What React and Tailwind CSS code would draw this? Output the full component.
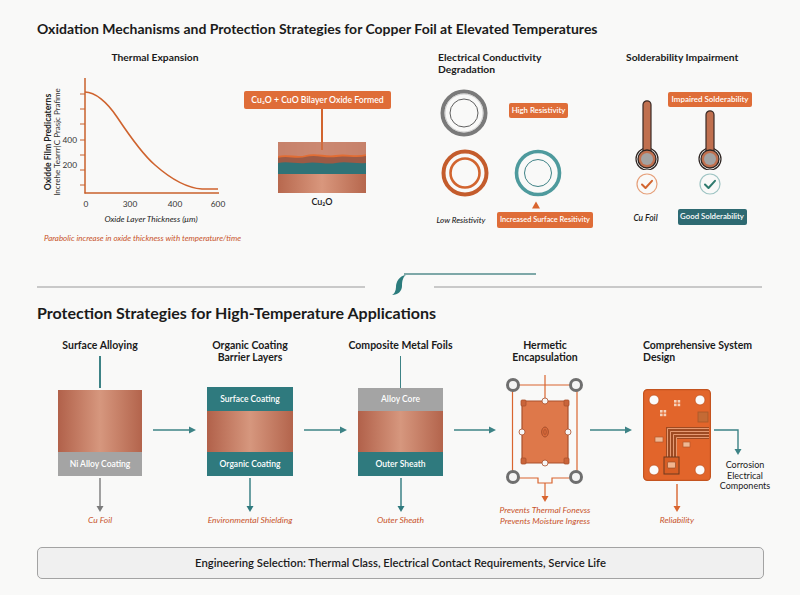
import React from "react";

const orange = "#d9652f";
const teal = "#2f7a7e";
const copper = "bg-linear-to-r from-[#b1614a] via-[#d6977e] to-[#b3644c]";

function DownArrow({ color, h = 34 }) {
  return (
    <svg width="10" height={h} viewBox={`0 0 10 ${h}`}>
      <line x1="5" y1="0" x2="5" y2={h - 5} stroke={color} strokeWidth="1.4" />
      <path d={`M1.5 ${h - 6} L5 ${h} L8.5 ${h - 6} Z`} fill={color} />
    </svg>
  );
}

function RightArrow({ w = 43 }) {
  return (
    <svg width={w} height="8" viewBox={`0 0 ${w} 8`} className="block">
      <line x1="0" y1="4" x2={w - 6} y2="4" stroke="#3d8386" strokeWidth="1.4" />
      <path d={`M${w - 7} 0.5 L${w} 4 L${w - 7} 7.5 Z`} fill="#3d8386" />
    </svg>
  );
}

function Ring({ kind }) {
  if (kind === "gray")
    return (
      <svg width="48" height="48" viewBox="0 0 48 48">
        <circle cx="24" cy="24" r="21.5" fill="none" stroke="#7a7a7a" strokeWidth="4" />
        <circle cx="24" cy="24" r="19" fill="none" stroke="#c4c4c4" strokeWidth="0.8" />
        <circle cx="24" cy="24" r="14" fill="none" stroke="#5f5f5f" strokeWidth="1" />
      </svg>
    );
  if (kind === "orange")
    return (
      <svg width="48" height="48" viewBox="0 0 48 48">
        <circle cx="24" cy="24" r="21.5" fill="none" stroke="#c45c2c" strokeWidth="4" />
        <circle cx="24" cy="24" r="14.5" fill="none" stroke="#d2652f" strokeWidth="2.6" />
      </svg>
    );
  return (
    <svg width="48" height="48" viewBox="0 0 48 48">
      <circle cx="24" cy="24" r="21.5" fill="none" stroke="#4e9a9d" strokeWidth="3.6" />
      <circle cx="24" cy="24" r="13.5" fill="none" stroke="#3f8286" strokeWidth="1" />
    </svg>
  );
}

function Thermometer({ h }) {
  const cy = h - 11;
  return (
    <svg width="24" height={h} viewBox={`0 0 24 ${h}`}>
      <circle cx="12" cy={cy} r="11" fill="none" stroke="#2f2623" strokeWidth="1.2" />
      <rect x="8" y="0.8" width="8" height={cy - 4} rx="4" fill="#c0704f" stroke="#3a2a26" strokeWidth="1.2" />
      <circle cx="12" cy={cy} r="9" fill="#c0704f" stroke="#2f2623" strokeWidth="1.3" />
      <circle cx="12" cy={cy} r="6" fill="#a3a3a3" />
    </svg>
  );
}

function Check({ ring, mark }) {
  return (
    <svg width="22" height="22" viewBox="0 0 22 22">
      <circle cx="11" cy="11" r="10" fill="none" stroke={ring} strokeWidth="1.2" />
      <path d="M6 11.5 L9.5 15 L16 7.8" fill="none" stroke={mark} strokeWidth="2" strokeLinecap="round" strokeLinejoin="round" />
    </svg>
  );
}

function Chart() {
  const yTicks = [22, 37, 52, 68, 83, 98, 113];
  return (
    <svg width="205" height="152" viewBox="0 0 205 152" className="block">
      <text transform="translate(14 70) rotate(-90)" textAnchor="middle" fontSize="8.6" fontWeight="700" fill="#222">
        Oxidde Film Predicaterns
      </text>
      <text transform="translate(23 70) rotate(-90)" textAnchor="middle" fontSize="8" fill="#333">
        Increhe Tearrr|C Prasjc Prafime
      </text>
      <line x1="48" y1="6" x2="48" y2="121.5" stroke="#c8602c" strokeWidth="1.5" />
      <line x1="47.5" y1="121" x2="182" y2="121" stroke="#c8602c" strokeWidth="1.5" />
      {yTicks.map((y) => (
        <line key={y} x1="43" y1={y} x2="48" y2={y} stroke="#c8602c" strokeWidth="1" />
      ))}
      <text x="40" y="71" textAnchor="end" fontSize="8.3" fill="#333">400</text>
      <text x="40" y="96" textAnchor="end" fontSize="8.3" fill="#333">200</text>
      {[[49, "0"], [93, "300"], [138, "400"], [181, "600"]].map(([x, t]) => (
        <text key={t} x={x} y="135" textAnchor="middle" fontSize="8.3" fill="#333">{t}</text>
      ))}
      <path
        d="M48 20 C58 20 70 30 80 45 C92 63 105 82 118 93 C135 108 150 116 165 117 L181 117"
        fill="none"
        stroke="#cf632e"
        strokeWidth="1.6"
      />
      <text x="114" y="150" textAnchor="middle" fontSize="8.3" fontStyle="italic" fill="#222">
        Oxide Layer Thickness (μm)
      </text>
    </svg>
  );
}

function OxideLayers() {
  return (
    <svg width="88" height="51" viewBox="0 0 88 51" className="block">
      <defs>
        <linearGradient id="cu" x1="0" x2="1" y1="0" y2="0">
          <stop offset="0" stopColor="#b7684e" />
          <stop offset="0.5" stopColor="#d9977d" />
          <stop offset="1" stopColor="#b6674d" />
        </linearGradient>
      </defs>
      <rect x="0" y="0" width="88" height="51" fill="url(#cu)" />
      <rect x="0" y="0" width="88" height="16" fill="#c98670" opacity="0.85" />
      <rect x="0" y="19" width="88" height="13" fill="#2f7377" />
      <path d="M0 15 C10 12 18 17 28 14 C38 11 48 16 58 14 C68 12 78 16 88 13 L88 21 C78 22 68 19 58 21 C48 23 38 19 28 21 C18 22 10 19 0 21 Z" fill="#9c5a45" />
      <path d="M0 15 C10 12 18 17 28 14 C38 11 48 16 58 14 C68 12 78 16 88 13" fill="none" stroke="#e26d33" strokeWidth="1.8" />
      <line x1="44" y1="0" x2="44" y2="8" stroke="#d2652f" strokeWidth="1.5" />
    </svg>
  );
}

function Hermetic() {
  const rings = [[8, 13], [71, 13], [8, 105], [71, 105]];
  const ol = "#a9502c";
  return (
    <svg width="80" height="132" viewBox="0 0 80 132" className="block">
      <g stroke={orange} strokeWidth="1.2" fill="none">
        <line x1="14" y1="13" x2="65" y2="13" />
        <line x1="7.5" y1="19" x2="7.5" y2="99" />
        <line x1="72" y1="19" x2="72" y2="99" />
        <path d="M14 106 H33 V111 H47 V106 H65" />
        <line x1="40" y1="3" x2="40" y2="29" />
        <line x1="40" y1="111" x2="40" y2="125" />
      </g>
      <path d="M36.5 124 L40 130 L43.5 124 Z" fill={orange} />
      <rect x="17" y="29" width="46" height="62" rx="2" fill="#de784a" stroke={ol} strokeWidth="1.2" />
      {[[16, 28], [59, 28], [16, 86], [59, 86]].map(([x, y], i) => (
        <rect key={i} x={x} y={y} width="5" height="6" rx="1" fill="#c9643a" stroke={ol} strokeWidth="0.8" />
      ))}
      {[[17, 60], [63, 60], [40, 29], [40, 91]].map(([x, y], i) => (
        <circle key={i} cx={x} cy={y} r="3" fill="#f6f6f6" stroke={ol} strokeWidth="0.8" />
      ))}
      <ellipse cx="40" cy="60" rx="3.4" ry="5" fill="#d8693a" stroke={ol} strokeWidth="1" />
      <ellipse cx="40" cy="60" rx="1.3" ry="2.6" fill="none" stroke={ol} strokeWidth="0.8" />
      {rings.map(([x, y], i) => (
        <circle key={i} cx={x} cy={y} r="5.5" fill="#f4f4f4" stroke="#6f6f6f" strokeWidth="3" />
      ))}
    </svg>
  );
}

function Pcb() {
  const holes = [[11, 11], [57, 11], [11, 81], [57, 81]];
  const quad = (x, y) =>
    [[0, 0], [3.6, 0], [0, 3.6], [3.6, 3.6]].map(([dx, dy], i) => (
      <rect key={`${x}-${i}`} x={x + dx} y={y + dy} width="2.6" height="2.6" fill="#f6d2bb" />
    ));
  return (
    <svg width="68" height="92" viewBox="0 0 68 92" className="block">
      <rect x="0.6" y="0.6" width="66.8" height="90.8" rx="4" fill="#e2652b" stroke="#c4541f" strokeWidth="1.2" />
      {holes.map(([x, y], i) => (
        <circle key={i} cx={x} cy={y} r="5" fill="#fbfbfb" stroke="#c4541f" strokeWidth="0.8" />
      ))}
      {quad(31, 11)}
      {quad(17, 21)}
      <rect x="55" y="23" width="10" height="10" fill="#c46a35" stroke="#a8582a" strokeWidth="0.8" />
      <path d="M23 70 V38 H66 V50 H34 V70 Z" fill="#9e4a22" />
      {[0, 1, 2, 3].map((i) => (
        <path
          key={i}
          d={`M${24.5 + i * 3} 70 V${39.5 + i * 3} H66`}
          fill="none"
          stroke="#eea37a"
          strokeWidth="0.9"
        />
      ))}
      <rect x="12" y="48" width="8" height="5" fill="#efb894" stroke="#b2582c" strokeWidth="0.7" />
      <rect x="40" y="53" width="7" height="5" fill="#efb894" stroke="#b2582c" strokeWidth="0.7" />
      <rect x="21" y="68" width="15" height="17" fill="#d85e25" stroke="#6d3a20" strokeWidth="1" />
      <rect x="24.5" y="73" width="8" height="6" rx="1" fill="#f2b48e" stroke="#8a4423" strokeWidth="0.6" />
    </svg>
  );
}

function Tag({ children, color = "bg-[#df6d38]", className = "" }) {
  return (
    <div className={`${color} text-white font-semibold rounded-[2px] flex items-center justify-center whitespace-nowrap ${className}`}>
      {children}
    </div>
  );
}

export default function App() {
  return (
    <div className="w-[800px] h-[595px] overflow-hidden bg-[#f9f9f8] text-[#1b1b1b] font-['Lato',sans-serif]">
      <h1 className="pl-[37px] pt-[20px] text-[14px] leading-[18px] font-bold whitespace-nowrap">
        Oxidation Mechanisms and Protection Strategies for Copper Foil at Elevated Temperatures
      </h1>

      {/* Oxidation mechanisms */}
      <section className="flex items-start mt-[12px] h-[210px]">
        <div className="ml-[37px] w-[207px] shrink-0 flex flex-col">
          <h3 className="w-[236px] text-center text-[10.3px] leading-[14px] font-bold">Thermal Expansion</h3>
          <div className="mt-[8px]">
            <Chart />
          </div>
          <p className="mt-[9px] ml-[7px] text-[8px] leading-[10px] italic text-[#c8532a] whitespace-nowrap">
            Parabolic increase in oxide thickness with temperature/time
          </p>
        </div>

        <div className="w-[147px] shrink-0 flex flex-col items-center mt-[41px]">
          <Tag className="h-[18px] w-[147px] text-[8.7px]">Cu₂O + CuO Bilayer Oxide Formed</Tag>
          <div className="ml-[9px] flex flex-col items-center">
            <div className="w-[1.5px] h-[33px] bg-[#d2652f]" />
            <OxideLayers />
            <span className="mt-[3px] text-[9px] leading-[12px] font-semibold">Cu₂O</span>
          </div>
        </div>

        <div className="ml-[45px] w-[165px] shrink-0 flex flex-col mt-[2px]">
          <h3 className="pl-[2px] text-[10.3px] leading-[11.5px] font-bold">
            Electrical Conductivity
            <br />
            Degradation
          </h3>
          <div className="flex items-center mt-[14px]">
            <div className="ml-[4px]">
              <Ring kind="gray" />
            </div>
            <Tag className="ml-[21px] -mt-[5px] h-[15px] w-[59px] text-[7.8px]">High Resistivity</Tag>
          </div>
          <div className="flex mt-[12px]">
            <div className="ml-[5px]">
              <Ring kind="orange" />
            </div>
            <div className="ml-[25px]">
              <Ring kind="teal" />
            </div>
          </div>
          <svg width="10" height="8" viewBox="0 0 10 8" className="ml-[95px] mt-[4px]">
            <path d="M5 0.5 L9 7.5 L1 7.5 Z" fill="#d9652f" />
          </svg>
          <div className="flex items-center mt-[3px]">
            <span className="w-[50px] text-center text-[8px] italic font-medium whitespace-nowrap">Low Resistivity</span>
            <Tag className="ml-[11px] h-[16px] w-[96px] text-[7.4px]">Increased Surface Resitivity</Tag>
          </div>
        </div>

        <div className="ml-[25px] w-[140px] shrink-0 flex flex-col mt-[2px]">
          <h3 className="text-[10.3px] leading-[11.5px] font-bold whitespace-nowrap">Solderability Impairment</h3>
          <div className="flex items-start mt-[28px]">
            <div className="w-[42px] flex flex-col items-center">
              <div className="mt-[8px]">
                <Thermometer h={70} />
              </div>
              <div className="mt-[3px]">
                <Check ring="#e6a07a" mark="#d2652f" />
              </div>
              <span className="mt-[18px] -ml-[3px] text-[8.5px] leading-[10px] italic font-semibold">Cu Foil</span>
            </div>
            <div className="w-[84px] flex flex-col items-center">
              <Tag className="h-[15px] w-[84px] text-[8px]">Impaired Solderability</Tag>
              <div className="mt-[3px]">
                <Thermometer h={60} />
              </div>
              <div className="mt-[3px]">
                <Check ring="#9ec4c3" mark="#2f7a6e" />
              </div>
              <Tag color="bg-[#2e6a72]" className="mt-[14px] ml-[4px] h-[16px] w-[69px] text-[7.8px]">
                Good Solderability
              </Tag>
            </div>
          </div>
        </div>
      </section>

      {/* Divider */}
      <div className="flex items-start h-[24px] mt-[12px]">
        <div className="ml-[37px] mt-[14px] w-[328px] h-[1.5px] bg-[#c9c9c9]" />
        <svg width="16" height="22" viewBox="0 0 16 22" className="ml-[26px] mt-[2px]">
          <path d="M15 1 C8 2 5 8 5 13 C5 17 3 20 1 21 C7 21 11 17 11 12 C11 7 12 3 15 1 Z" fill="#2c7c7d" />
        </svg>
        <div className="flex flex-col">
          <div className="-ml-[3px] mt-[1px] w-[132px] h-[1.5px] bg-[#7ea8a8]" />
          <div className="ml-[27px] mt-[11.5px] w-[328px] h-[1.5px] bg-[#c9c9c9]" />
        </div>
      </div>

      <h2 className="pl-[37px] mt-[7px] text-[16px] leading-[20px] font-bold whitespace-nowrap">
        Protection Strategies for High-Temperature Applications
      </h2>

      {/* Protection strategies */}
      <section className="flex items-start mt-[16px] h-[190px]">
        <div className="ml-[58px] w-[84px] shrink-0 flex flex-col items-center">
          <h4 className="text-[10.5px] leading-[12px] font-bold whitespace-nowrap">Surface Alloying</h4>
          <div className="mt-[5px] w-[1.5px] h-[32px] bg-[#3d8386]" />
          <div className="mt-[2px] w-[84px] h-[86px] flex flex-col">
            <div className={`flex-1 ${copper}`} />
            <div className="h-[24px] bg-[#a4a4a4] text-white text-[8.5px] font-semibold flex items-center justify-center">
              Ni Alloy Coating
            </div>
          </div>
          <div className="mt-[2px]">
            <DownArrow color="#7b7b7b" />
          </div>
          <span className="mt-[3px] text-[8.5px] leading-[10px] italic text-[#c8532a] whitespace-nowrap">Cu Foil</span>
        </div>

        <div className="ml-[11px] mt-[87px] shrink-0">
          <RightArrow />
        </div>

        <div className="ml-[11px] w-[86px] shrink-0 flex flex-col items-center">
          <h4 className="text-[10.5px] leading-[12px] font-bold text-center whitespace-nowrap">
            Organic Coating
            <br />
            Barrier Layers
          </h4>
          <div className="mt-[24px] w-[86px] h-[89px] flex flex-col">
            <div className="h-[24px] bg-[#2f7a7e] text-white text-[8.5px] font-semibold flex items-center justify-center">
              Surface Coating
            </div>
            <div className={`flex-1 ${copper}`} />
            <div className="h-[24px] bg-[#2f7a7e] text-white text-[8.5px] font-semibold flex items-center justify-center">
              Organic Coating
            </div>
          </div>
          <div className="mt-[2px]">
            <DownArrow color={teal} />
          </div>
          <span className="mt-[3px] text-[8.5px] leading-[10px] italic text-[#c8532a] whitespace-nowrap">
            Environmental Shielding
          </span>
        </div>

        <div className="ml-[11px] mt-[87px] shrink-0">
          <RightArrow />
        </div>

        <div className="ml-[11px] w-[85px] shrink-0 flex flex-col items-center">
          <h4 className="text-[10.5px] leading-[12px] font-bold whitespace-nowrap">Composite Metal Foils</h4>
          <div className="mt-[5px] w-[1.5px] h-[32px] bg-[#3d8386]" />
          <div className="w-[85px] h-[88px] flex flex-col">
            <div className="h-[23px] bg-[#a4a4a4] text-white text-[8.5px] font-semibold flex items-center justify-center">
              Alloy Core
            </div>
            <div className={`flex-1 ${copper}`} />
            <div className="h-[24px] bg-[#2f7a7e] text-white text-[8.5px] font-semibold flex items-center justify-center">
              Outer Sheath
            </div>
          </div>
          <div className="mt-[2px]">
            <DownArrow color={teal} />
          </div>
          <span className="mt-[3px] text-[8.5px] leading-[10px] italic text-[#c8532a] whitespace-nowrap">Outer Sheath</span>
        </div>

        <div className="ml-[11px] mt-[87px] shrink-0">
          <RightArrow w={42} />
        </div>

        <div className="ml-[9px] w-[80px] shrink-0 flex flex-col items-center">
          <h4 className="text-[10.5px] leading-[12px] font-bold text-center whitespace-nowrap">
            Hermetic
            <br />
            Encapsulation
          </h4>
          <div className="mt-[9px]">
            <Hermetic />
          </div>
          <p className="mt-[1px] text-[8.5px] leading-[11px] italic text-[#c8532a] text-center whitespace-nowrap">
            Prevents Thermal Fonevss
            <br />
            Prevents Moisture Ingress
          </p>
        </div>

        <div className="ml-[5px] mt-[87px] shrink-0">
          <RightArrow w={42} />
        </div>

        <div className="ml-[11px] w-[68px] shrink-0 flex flex-col items-center">
          <h4 className="self-start text-[10.5px] leading-[12px] font-bold whitespace-nowrap">
            Comprehensive System
            <br />
            Design
          </h4>
          <div className="mt-[26px]">
            <Pcb />
          </div>
          <div className="mt-[3px]">
            <DownArrow color={orange} h={28} />
          </div>
          <span className="mt-[3px] text-[8.5px] leading-[10px] italic text-[#c8532a]">Reliability</span>
        </div>

        <div className="ml-[3px] w-[62px] shrink-0 flex flex-col items-center mt-[89px]">
          <svg width="32" height="28" viewBox="0 0 32 28" className="self-start">
            <path d="M0 2 H24 V22" fill="none" stroke="#3d8386" strokeWidth="1.4" />
            <path d="M20.5 21 L24 27 L27.5 21 Z" fill="#3d8386" />
          </svg>
          <p className="mt-[4px] text-[9px] leading-[10.5px] text-center whitespace-nowrap">
            Corrosion
            <br />
            Electrical
            <br />
            Components
          </p>
        </div>
      </section>

      <div className="ml-[37px] mt-[18px] w-[727px] h-[32px] rounded-[5px] border border-[#a3a3a3] bg-[#f0f0f0] flex items-center justify-center">
        <span className="text-[11.3px] font-semibold">
          Engineering Selection: Thermal Class, Electrical Contact Requirements, Service Life
        </span>
      </div>
    </div>
  );
}
